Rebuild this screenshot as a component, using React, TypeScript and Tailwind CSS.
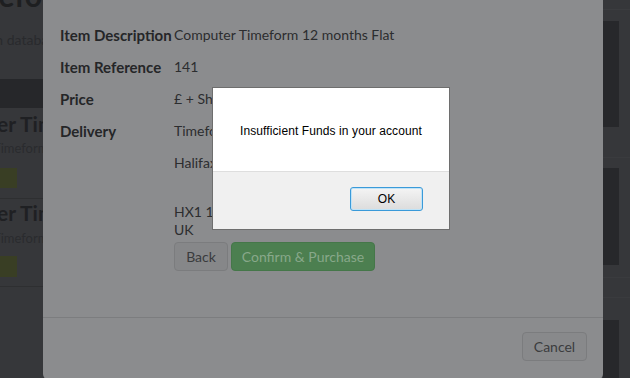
import React from 'react';

const sans = { fontFamily: 'Lato, "Open Sans", sans-serif' };

function BackgroundPage() {
  return (
    <div className="flex h-[378px] w-[630px] overflow-hidden bg-[#36373a]" style={sans}>
      {/* left column of the page behind the modal */}
      <div className="w-[43px] shrink-0 overflow-hidden">
        <div className="w-[300px] whitespace-nowrap">
          <div className="-mt-[22px] -ml-[52px] h-[34px] text-[30px] font-bold leading-[34px] text-[#1e1f21]">Timeform</div>
          <div className="mt-[19px] -ml-[8px] text-[14px] leading-[18px] text-[#292a2d]">in database</div>
          <div className="mt-[30px] h-[29px] bg-[#26272a]" />
          <div className="mt-[3px] -ml-[3px] text-[21px] font-bold leading-[26px] text-[#1f2023]">er Timeform</div>
          <div className="mt-[3px] -ml-[7px] text-[13px] leading-[16px] text-[#2a2b2e]">Timeform</div>
          <div className="mt-[12px] h-[20px] w-[17px] bg-[#393e24]" />
          <div className="mt-[10px] h-px bg-[#2e2f31]" />
          <div className="mt-[1px] -ml-[3px] text-[21px] font-bold leading-[26px] text-[#1f2023]">er Timeform</div>
          <div className="mt-[4px] -ml-[7px] text-[13px] leading-[16px] text-[#2a2b2e]">Timeform</div>
          <div className="mt-[10px] h-[21px] w-[17px] bg-[#393e24]" />
          <div className="mt-[9px] h-px bg-[#2e2f31]" />
        </div>
      </div>
      <div className="w-[560px] shrink-0" />
      {/* right column of the page */}
      <div className="flex-1 flex flex-col">
        <div className="mt-[9px] h-px bg-[#3b3c3f]" />
        <div className="mt-[11px] h-[110px] w-[16px] bg-[#27282b]" />
        <div className="mt-[30px] h-px bg-[#3a3b3e]" />
        <div className="mt-[10px] h-[100px] w-[16px] bg-[#27282b]" />
        <div className="mt-[12px] h-px bg-[#3a3b3e]" />
        <div className="mt-[19px] h-px bg-[#3a3b3e]" />
        <div className="mt-[22px] h-[60px] w-[16px] bg-[#27282b]" />
      </div>
    </div>
  );
}

function Row({ label, children }: { label: string; children: React.ReactNode }) {
  return (
    <>
      <div className="text-[15px] font-bold leading-[18px] text-[#252628]">{label}</div>
      <div className="text-[14px] leading-[18px] text-[#2c2d2f]">{children}</div>
    </>
  );
}

function PurchaseModal() {
  return (
    <div className="absolute left-[43px] top-0 flex h-[380px] w-[560px] flex-col rounded-b-[6px] bg-[#8b8c8e]" style={sans}>
      <div className="h-[318px] border-b border-[#7c7d7f] pl-[17px] pt-[26px]">
        <div className="grid grid-cols-[114px_1fr] gap-y-[14px]">
          <Row label="Item Description">Computer Timeform 12 months Flat</Row>
          <Row label="Item Reference">141</Row>
          <Row label="Price">£ + Shipping</Row>
          <Row label="Delivery">
            <div>Timeform Ltd</div>
            <div className="mt-[14px]">Halifax</div>
            <div className="mt-[31px]">HX1 1XE</div>
            <div>UK</div>
            <div className="mt-[3px] flex gap-[3px]">
              <button className="h-[29px] w-[54px] rounded-[4px] border border-[#7b7c7e] bg-[#868789] text-[14px] text-[#3a3b3d]">Back</button>
              <button className="h-[29px] w-[144px] rounded-[4px] border border-[#457749] bg-[#4c7f50] text-[14px] text-[#88a88a]">Confirm &amp; Purchase</button>
            </div>
          </Row>
        </div>
      </div>
      <div className="flex justify-end pr-[16px] pt-[14px]">
        <button className="h-[29px] w-[65px] rounded-[4px] border border-[#7b7c7e] bg-[#88898b] text-[14px] text-[#3b3c3e]">Cancel</button>
      </div>
    </div>
  );
}

function AlertBox() {
  return (
    <div
      className="absolute left-[212px] top-[87px] flex h-[143px] w-[238px] flex-col border border-[#6e6e6e] bg-white"
      style={{ fontFamily: '"Liberation Sans", Arial, sans-serif' }}
    >
      <div className="flex h-[84px] items-center justify-center border-b border-[#dedede] pt-[2px] text-[12px] tracking-[0.1px] text-black">
        Insufficient Funds in your account
      </div>
      <div className="flex flex-1 justify-end bg-[#f0f0f0] pr-[26px] pt-[15px]">
        <button className="h-[24px] w-[73px] rounded-[3px] border border-[#3a9ad9] bg-gradient-to-b from-[#f4f4f4] to-[#dcdcdc] text-[12px] text-black shadow-[inset_0_0_0_1px_#bfe3f7]">
          OK
        </button>
      </div>
    </div>
  );
}

export default function App() {
  return (
    <div className="relative h-[378px] w-[630px] overflow-hidden">
      <BackgroundPage />
      <PurchaseModal />
      <AlertBox />
    </div>
  );
}
